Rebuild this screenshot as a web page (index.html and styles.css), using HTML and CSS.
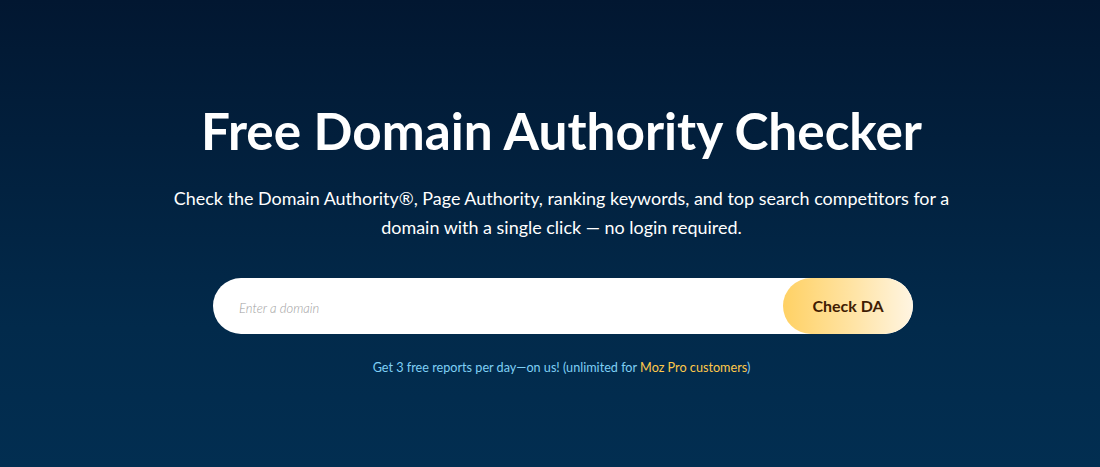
FILE: index.html
```html
<!DOCTYPE html>
<html lang="en">
<head>
<meta charset="utf-8">
<title>Free Domain Authority Checker</title>
<link rel="stylesheet" href="styles.css">
</head>
<body>
<main class="hero">
  <h1 class="title">Free Domain Authority Checker</h1>
  <p class="lead">Check the Domain Authority®, Page Authority, ranking keywords, and top search competitors for a domain with a single click — no login required.</p>
  <form class="search">
    <input class="search-input" type="text" placeholder="Enter a domain">
    <button class="search-btn" type="button">Check DA</button>
  </form>
  <p class="note">Get 3 free reports per day—on us! (unlimited for <a class="note-link" href="#">Moz Pro customers</a>)</p>
</main>
</body>
</html>
```

FILE: styles.css
```css
html, body {
  margin: 0;
  padding: 0;
  height: 100%;
}
body {
  font-family: Lato, "Open Sans", sans-serif;
  background: linear-gradient(180deg, #021731 0%, #022a4b 70%, #022e51 100%);
  color: #fff;
}
.hero {
  display: flex;
  flex-direction: column;
  align-items: center;
  padding: 98px 0 0 23px;
}
.title {
  margin: 0;
  font-size: 51.3px;
  font-weight: 700;
  line-height: 64px;
  letter-spacing: 0;
}
.lead {
  margin: 22px 0 0;
  width: 800px;
  text-align: center;
  font-size: 17.95px;
  line-height: 29px;
}
.search {
  margin: 36px 0 0 3px;
  width: 700px;
  height: 56px;
  display: flex;
  background: #fff;
  border-radius: 28px;
  overflow: hidden;
}
.search-input {
  flex: 1;
  border: 0;
  outline: 0;
  padding: 4px 0 0 26px;
  font-family: Lato, sans-serif;
  font-size: 13px;
  background: transparent;
}
.search-input::placeholder {
  color: #a0a0a0;
  font-style: italic;
  font-weight: 300;
}
.search-btn {
  width: 130px;
  border: 0;
  border-radius: 28px;
  padding: 0 0 2px;
  background: linear-gradient(90deg, #ffd164 0%, #ffe4a6 55%, #fff5e2 100%);
  color: #3f1c03;
  font-family: Lato, sans-serif;
  font-weight: 700;
  font-size: 16px;
}
.note {
  margin: 26px 0 0;
  font-size: 12.65px;
  color: #7fd0f5;
}
.note-link {
  color: #ffc94a;
  text-decoration: none;
}
```
